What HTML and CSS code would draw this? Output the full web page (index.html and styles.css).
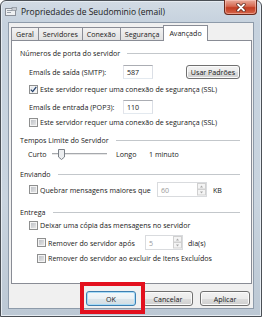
FILE: index.html
```html
<!DOCTYPE html>
<html lang="pt">
<head>
    <meta charset="UTF-8">
    <title>Propriedades de Seudominio (email)</title>
    <link rel="stylesheet" href="styles.css">
</head>
<body>
    <div class="janela">
        <div class="barra-titulo">
            <svg class="icone" width="12" height="10" viewBox="0 0 12 10">
                <rect x="0.5" y="1.5" width="10" height="7" fill="#eef0f2" stroke="#8a9099"/>
                <rect x="2" y="3" width="5" height="1" fill="#9aa2ab"/>
                <rect x="2" y="5" width="4" height="1" fill="#9aa2ab"/>
                <rect x="7" y="0.5" width="4.5" height="3" fill="#c9ced4" stroke="#7d848c" stroke-width="0.6"/>
            </svg>
            <span class="titulo">Propriedades de Seudominio (email)</span>
            <div class="fechar">
                <svg width="10" height="9" viewBox="0 0 10 9">
                    <path d="M2 1.5 L8 7.5 M8 1.5 L2 7.5" stroke="#5a2418" stroke-width="3.2" stroke-linecap="round"/>
                    <path d="M2 1.5 L8 7.5 M8 1.5 L2 7.5" stroke="#ffffff" stroke-width="1.8" stroke-linecap="round"/>
                </svg>
            </div>
        </div>

        <div class="cliente">
            <div class="abas">
                <div class="aba">Geral</div>
                <div class="aba">Servidores</div>
                <div class="aba">Conexão</div>
                <div class="aba">Segurança</div>
                <div class="aba ativa">Avançado</div>
            </div>

            <div class="painel">
                <div class="grupo">Números de porta do servidor</div>

                <div class="linha smtp">
                    <span class="rotulo">Emails de saída (SMTP):</span>
                    <span class="campo">587</span>
                    <button class="btn padroes">Usar Padrões</button>
                </div>
                <div class="linha ssl1">
                    <span class="caixa marcada">
                        <svg width="7" height="7" viewBox="0 0 7 7"><path d="M0.8 3.6 L2.7 5.6 L6.3 0.8" fill="none" stroke="#24406a" stroke-width="1.3"/></svg>
                    </span>
                    <span>Este servidor requer uma conexão de segurança (SSL)</span>
                </div>
                <div class="linha pop3">
                    <span class="rotulo">Emails de entrada (POP3):</span>
                    <span class="campo">110</span>
                </div>
                <div class="linha ssl2">
                    <span class="caixa"></span>
                    <span>Este servidor requer uma conexão de segurança (SSL)</span>
                </div>

                <div class="grupo tempos">Tempos Limite do Servidor</div>
                <div class="linha deslizador">
                    <span class="curto">Curto</span>
                    <span class="trilho">
                        <svg class="cursor" width="7" height="11" viewBox="0 0 7 11">
                            <path d="M0.5 0.5 H6.5 V8 L3.5 10.5 L0.5 8 Z" fill="#eceef0" stroke="#7b8188"/>
                        </svg>
                    </span>
                    <span class="longo">Longo</span>
                    <span>1 minuto</span>
                </div>

                <div class="grupo enviando">Enviando</div>
                <div class="linha quebrar">
                    <span class="caixa"></span>
                    <span class="rotulo-caixa">Quebrar mensagens maiores que</span>
                    <span class="giro largo">
                        <span class="valor">60</span>
                        <span class="setas">
                            <svg width="9" height="13" viewBox="0 0 9 13">
                                <rect x="0.5" y="0.5" width="8" height="5.5" fill="#f4f4f4" stroke="#d0d0d0"/>
                                <rect x="0.5" y="6.5" width="8" height="5.5" fill="#f4f4f4" stroke="#d0d0d0"/>
                                <path d="M3 4.5 L4.5 2.5 L6 4.5 Z" fill="#a8a8a8"/>
                                <path d="M3 8.5 L4.5 10.5 L6 8.5 Z" fill="#a8a8a8"/>
                            </svg>
                        </span>
                    </span>
                    <span class="unidade">KB</span>
                </div>

                <div class="grupo entrega">Entrega</div>
                <div class="linha deixar">
                    <span class="caixa"></span>
                    <span>Deixar uma cópia das mensagens no servidor</span>
                </div>
                <div class="linha sub remover">
                    <span class="caixa"></span>
                    <span class="rotulo-apos">Remover do servidor após</span>
                    <span class="giro estreito">
                        <span class="valor">5</span>
                        <span class="setas">
                            <svg width="9" height="13" viewBox="0 0 9 13">
                                <rect x="0.5" y="0.5" width="8" height="5.5" fill="#f4f4f4" stroke="#d0d0d0"/>
                                <rect x="0.5" y="6.5" width="8" height="5.5" fill="#f4f4f4" stroke="#d0d0d0"/>
                                <path d="M3 4.5 L4.5 2.5 L6 4.5 Z" fill="#a8a8a8"/>
                                <path d="M3 8.5 L4.5 10.5 L6 8.5 Z" fill="#a8a8a8"/>
                            </svg>
                        </span>
                    </span>
                    <span class="unidade">dia(s)</span>
                </div>
                <div class="linha sub itens">
                    <span class="caixa"></span>
                    <span>Remover do servidor ao excluir de Itens Excluídos</span>
                </div>
            </div>

            <div class="botoes">
                <button class="btn padrao">OK</button>
                <button class="btn">Cancelar</button>
                <button class="btn">Aplicar</button>
            </div>
        </div>

        <!-- marcação vermelha por cima do OK -->
        <div class="destaque"></div>
    </div>
</body>
</html>
```

FILE: styles.css
```css
body {
    margin: 0;
    background-color: #ffffff;
    font-family: "Open Sans", "Noto Sans", sans-serif;
    font-size: 7.1px;
    color: #1a1a1a;
    white-space: nowrap;
}
.janela {
    position: relative;
    width: 262px;
    height: 317px;
    box-sizing: border-box;
    border: 1px solid #4a4f55;
    border-radius: 6px 6px 0 0;
    background: linear-gradient(to bottom, #d2dbe4 0px, #c6d2de 22px, #c9d4df 200px, #bcc8d4 100%);
    box-shadow: inset 0 0 0 1px #e6ecf2;
}
.barra-titulo {
    display: flex;
    align-items: center;
    height: 21px;
    padding-left: 4px;
}
.icone {
    margin-top: 1px;
}
.titulo {
    margin-left: 4px;
    font-size: 8.5px;
    color: #1b1b1b;
}
.fechar {
    align-self: flex-start;
    margin-left: auto;
    margin-right: 4px;
    margin-top: -1px;
    width: 33px;
    height: 15px;
    box-sizing: border-box;
    display: flex;
    align-items: center;
    justify-content: center;
    border: 1px solid #6b2a1d;
    border-top: none;
    border-radius: 0 0 4px 4px;
    background: linear-gradient(to bottom, #e9ab9b 0%, #d66a52 45%, #c23d22 55%, #d5654a 100%);
    box-shadow: inset 0 0 0 1px rgba(255, 210, 200, 0.5);
}
.cliente {
    margin: 0 7px;
    width: 246px;
    height: 287px;
    box-sizing: border-box;
    border: 1px solid #8e9baa;
    background-color: #f0f0f0;
    padding: 2px 3px 0 2px;
}
.abas {
    display: flex;
    align-items: flex-end;
    height: 15px;
    position: relative;
    z-index: 1;
}
.aba {
    height: 13px;
    box-sizing: border-box;
    padding: 0 4px;
    display: flex;
    align-items: center;
    border: 1px solid #898c95;
    border-bottom: none;
    margin-right: -1px;
    background: linear-gradient(to bottom, #f2f2f2, #e1e1e1);
}
.aba.ativa {
    height: 16px;
    margin-bottom: -1px;
    background: #ffffff;
    padding: 0 5px 2px;
}
.painel {
    width: 241px;
    height: 244px;
    box-sizing: border-box;
    border: 1px solid #898c95;
    background-color: #ffffff;
    padding: 6px 11px 0 8px;
    display: flex;
    flex-direction: column;
}
.grupo {
    display: flex;
    align-items: center;
    gap: 7px;
    height: 12px;
}
.grupo::after {
    content: "";
    flex: 1;
    border-top: 1px solid #c3c7cb;
}
.linha {
    display: flex;
    align-items: center;
    height: 12px;
    padding-left: 9px;
}
.linha.sub {
    padding-left: 17px;
}
.smtp { height: 15px; margin-top: 5px; }
.ssl1 { margin-top: 4px; }
.pop3 { height: 15px; margin-top: 4px; }
.ssl2 { margin-top: 2px; }
.tempos { margin-top: 6px; }
.deslizador { margin-top: 2px; padding-left: 8px; }
.enviando { margin-top: 8px; }
.quebrar { height: 15px; margin-top: 2px; }
.entrega { margin-top: 9px; }
.deixar { margin-top: 1px; }
.remover { height: 15px; margin-top: 4px; }
.itens { margin-top: 2px; }

.rotulo {
    width: 94px;
}
.campo {
    width: 30px;
    height: 14px;
    box-sizing: border-box;
    border: 1px solid;
    border-color: #abadb3 #dbdfe6 #e3e9ef #e2e3ea;
    background: #ffffff;
    padding-left: 3px;
    display: flex;
    align-items: center;
}
.btn {
    font-family: inherit;
    font-size: inherit;
    color: #1a1a1a;
    height: 15px;
    box-sizing: border-box;
    padding: 0;
    border: 1px solid #707070;
    border-radius: 3px;
    background: linear-gradient(to bottom, #f2f2f2 0%, #ebebeb 50%, #dddddd 51%, #cfcfcf 100%);
    box-shadow: inset 0 0 0 1px #fbfbfb;
}
.btn.padroes {
    margin-left: auto;
    width: 54px;
    height: 14px;
}
.caixa {
    width: 9px;
    height: 9px;
    box-sizing: border-box;
    border: 1px solid #8e8f8f;
    background: linear-gradient(135deg, #b8bcc2, #ebebeb);
    box-shadow: inset 0 0 0 1px #f4f4f4;
    margin-right: 2px;
    display: flex;
    align-items: center;
    justify-content: center;
    flex-shrink: 0;
}
.caixa.marcada {
    background: linear-gradient(135deg, #dfe3e8, #fafafa);
}
.curto {
    width: 24px;
}
.trilho {
    width: 55px;
    height: 11px;
    display: flex;
    align-items: center;
    background: linear-gradient(to bottom, transparent 4px, #a6a9ad 4px, #a6a9ad 5px, #e6e6e6 5px, #e6e6e6 6px, transparent 6px);
}
.cursor {
    margin-left: 6px;
}
.longo {
    margin-left: 9px;
    width: 33px;
}
.rotulo-caixa {
    width: 117px;
}
.rotulo-apos {
    width: 97px;
}
.giro {
    height: 15px;
    box-sizing: border-box;
    border: 1px solid #d9dbde;
    background: #ffffff;
    display: flex;
    align-items: center;
    padding-left: 3px;
    color: #9a9a9a;
}
.giro.largo { width: 50px; }
.giro.estreito { width: 38px; }
.giro .valor {
    flex: 1;
}
.setas {
    display: flex;
}
.unidade {
    margin-left: 6px;
}
.remover .unidade {
    margin-left: 5px;
}
.botoes {
    display: flex;
    justify-content: flex-end;
    gap: 7px;
    margin-top: 7px;
}
.botoes .btn {
    width: 50px;
}
.btn.padrao {
    border-color: #3c7fb1;
    box-shadow: inset 0 0 0 1px #a9dcf7;
    background: linear-gradient(to bottom, #f4f8fa 0%, #eaf1f5 50%, #dde6eb 51%, #d2dde3 100%);
}
.destaque {
    position: absolute;
    left: 79px;
    top: 281px;
    width: 65px;
    height: 32px;
    box-sizing: border-box;
    border: 4px solid #e3101e;
}
```
